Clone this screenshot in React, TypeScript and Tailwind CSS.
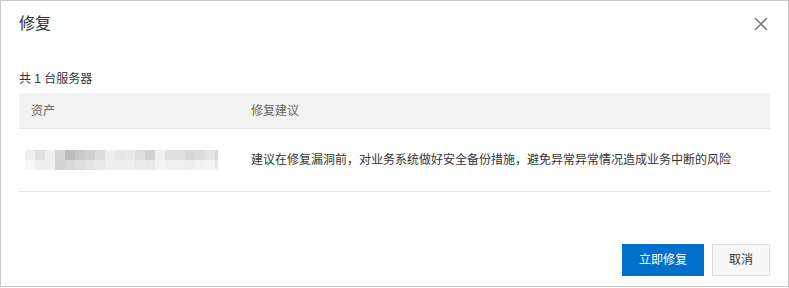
import React from "react";

const topBlocks = [
  "#efefef", "#e0e0e0", "#f0f0f0", "#d6d6d6", "#bcbcbc", "#c8c8c8", "#d0d0d0", "#dcdcdc", "#efefef", "#e6e6e6",
  "#e9e9e9", "#dedede", "#d2d2d2", "#f0f0f0", "#e0e0e0", "#e0e0e0", "#d8d8d8", "#dcdcdc", "#e4e4e4", "#d8d8d8",
];
const bottomBlocks = [
  "#f8f8f8", "#efefef", "#f0f0f0", "#d4d4d4", "#d8d8d8", "#dedede", "#e4e4e4", "#e8e8e8", "#f0f0f0", "#efefef",
  "#f0f0f0", "#ebebeb", "#e8e8e8", "#f4f4f4", "#f0f0f0", "#f0f0f0", "#eeeeee", "#f2f2f2", "#f4f4f4", "#e8e8e8",
];

function BlurredAsset() {
  const row = (colors: string[]) => (
    <div className="flex h-[10px]">
      {colors.map((c, i) => (
        <div
          key={i}
          className={i === colors.length - 1 ? "h-full w-[3px]" : "h-full w-[10px]"}
          style={{ backgroundColor: c }}
        />
      ))}
    </div>
  );
  return (
    <div className="flex flex-col">
      {row(topBlocks)}
      {row(bottomBlocks)}
    </div>
  );
}

export default function App() {
  return (
    <div
      className="flex h-[287px] w-[789px] flex-col border border-[#c9c9c9] bg-white text-[12px] text-[#333]"
      style={{ fontFamily: '"Liberation Sans", "Noto Sans CJK SC", sans-serif' }}
    >
      {/* Header */}
      <div className="flex items-start justify-between pl-[18px] pr-[20px] pt-[11px]">
        <h2 className="text-[16px] leading-[24px] text-[#333]">修复</h2>
        <button className="mt-[5px] flex h-[14px] w-[14px] items-center justify-center text-[#808080]" title="关闭">
          <svg viewBox="0 0 14 14" className="h-[14px] w-[14px]" fill="none" stroke="currentColor" strokeWidth="1.6">
            <path d="M1 1L13 13M13 1L1 13" />
          </svg>
        </button>
      </div>

      {/* Body */}
      <div className="px-[18px]">
        <p className="mt-[34px] leading-[18px]">共 1 台服务器</p>

        <div className="mt-[5px]">
          <div className="flex h-[36px] items-center border-b border-[#e8e8e8] bg-[#f2f2f2] text-[#666]">
            <div className="w-[222px] pl-[12px]">资产</div>
            <div className="flex-1 pl-[10px]">修复建议</div>
          </div>
          <div className="flex h-[63px] items-center border-b border-[#e5e5e5]">
            <div className="w-[222px] pl-[6px]">
              <BlurredAsset />
            </div>
            <div className="flex-1 pl-[10px]">
              建议在修复漏洞前，对业务系统做好安全备份措施，避免异常异常情况造成业务中断的风险
            </div>
          </div>
        </div>
      </div>

      {/* Footer */}
      <div className="mt-auto flex justify-end gap-[8px] pb-[10px] pr-[18px]">
        <button className="h-[32px] w-[82px] bg-[#0070cc] text-white">立即修复</button>
        <button className="h-[32px] w-[58px] border border-[#dcdcdc] bg-[#f7f7f7] text-[#333]">取消</button>
      </div>
    </div>
  );
}
